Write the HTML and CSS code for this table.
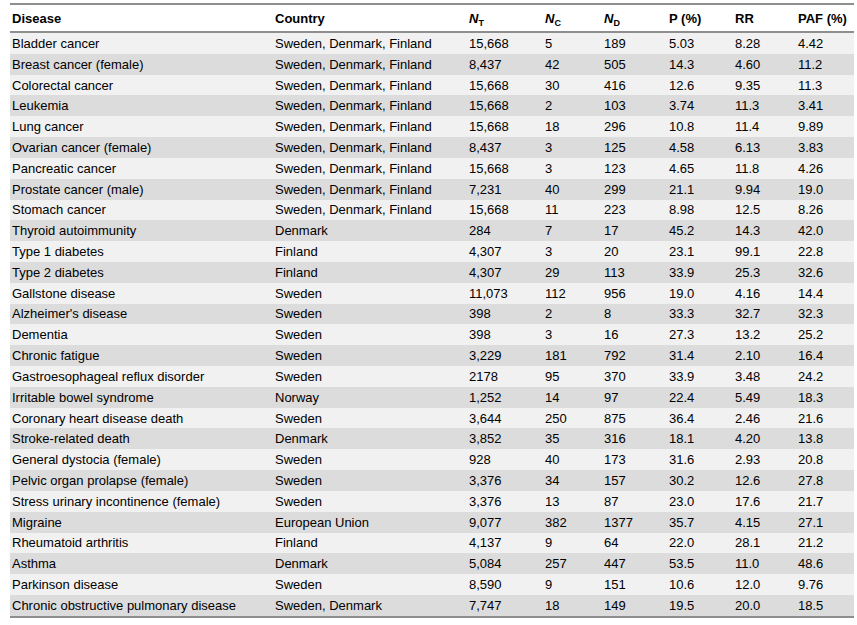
FILE: index.html
```html
<!DOCTYPE html>
<html>
<head>
<meta charset="utf-8">
<link rel="stylesheet" href="styles.css">
</head>
<body>
<table class="data">
<colgroup>
<col class="c1"><col class="c2"><col class="c3"><col class="c4"><col class="c5"><col class="c6"><col class="c7"><col class="c8">
</colgroup>
<thead>
<tr><th>Disease</th><th>Country</th><th><i>N</i><sub>T</sub></th><th><i>N</i><sub>C</sub></th><th><i>N</i><sub>D</sub></th><th>P (%)</th><th>RR</th><th>PAF (%)</th></tr>
</thead>
<tbody>
<tr><td>Bladder cancer</td><td>Sweden, Denmark, Finland</td><td>15,668</td><td>5</td><td>189</td><td>5.03</td><td>8.28</td><td>4.42</td></tr>
<tr><td>Breast cancer (female)</td><td>Sweden, Denmark, Finland</td><td>8,437</td><td>42</td><td>505</td><td>14.3</td><td>4.60</td><td>11.2</td></tr>
<tr><td>Colorectal cancer</td><td>Sweden, Denmark, Finland</td><td>15,668</td><td>30</td><td>416</td><td>12.6</td><td>9.35</td><td>11.3</td></tr>
<tr><td>Leukemia</td><td>Sweden, Denmark, Finland</td><td>15,668</td><td>2</td><td>103</td><td>3.74</td><td>11.3</td><td>3.41</td></tr>
<tr><td>Lung cancer</td><td>Sweden, Denmark, Finland</td><td>15,668</td><td>18</td><td>296</td><td>10.8</td><td>11.4</td><td>9.89</td></tr>
<tr><td>Ovarian cancer (female)</td><td>Sweden, Denmark, Finland</td><td>8,437</td><td>3</td><td>125</td><td>4.58</td><td>6.13</td><td>3.83</td></tr>
<tr><td>Pancreatic cancer</td><td>Sweden, Denmark, Finland</td><td>15,668</td><td>3</td><td>123</td><td>4.65</td><td>11.8</td><td>4.26</td></tr>
<tr><td>Prostate cancer (male)</td><td>Sweden, Denmark, Finland</td><td>7,231</td><td>40</td><td>299</td><td>21.1</td><td>9.94</td><td>19.0</td></tr>
<tr><td>Stomach cancer</td><td>Sweden, Denmark, Finland</td><td>15,668</td><td>11</td><td>223</td><td>8.98</td><td>12.5</td><td>8.26</td></tr>
<tr><td>Thyroid autoimmunity</td><td>Denmark</td><td>284</td><td>7</td><td>17</td><td>45.2</td><td>14.3</td><td>42.0</td></tr>
<tr><td>Type 1 diabetes</td><td>Finland</td><td>4,307</td><td>3</td><td>20</td><td>23.1</td><td>99.1</td><td>22.8</td></tr>
<tr><td>Type 2 diabetes</td><td>Finland</td><td>4,307</td><td>29</td><td>113</td><td>33.9</td><td>25.3</td><td>32.6</td></tr>
<tr><td>Gallstone disease</td><td>Sweden</td><td>11,073</td><td>112</td><td>956</td><td>19.0</td><td>4.16</td><td>14.4</td></tr>
<tr><td>Alzheimer's disease</td><td>Sweden</td><td>398</td><td>2</td><td>8</td><td>33.3</td><td>32.7</td><td>32.3</td></tr>
<tr><td>Dementia</td><td>Sweden</td><td>398</td><td>3</td><td>16</td><td>27.3</td><td>13.2</td><td>25.2</td></tr>
<tr><td>Chronic fatigue</td><td>Sweden</td><td>3,229</td><td>181</td><td>792</td><td>31.4</td><td>2.10</td><td>16.4</td></tr>
<tr><td>Gastroesophageal reflux disorder</td><td>Sweden</td><td>2178</td><td>95</td><td>370</td><td>33.9</td><td>3.48</td><td>24.2</td></tr>
<tr><td>Irritable bowel syndrome</td><td>Norway</td><td>1,252</td><td>14</td><td>97</td><td>22.4</td><td>5.49</td><td>18.3</td></tr>
<tr><td>Coronary heart disease death</td><td>Sweden</td><td>3,644</td><td>250</td><td>875</td><td>36.4</td><td>2.46</td><td>21.6</td></tr>
<tr><td>Stroke-related death</td><td>Denmark</td><td>3,852</td><td>35</td><td>316</td><td>18.1</td><td>4.20</td><td>13.8</td></tr>
<tr><td>General dystocia (female)</td><td>Sweden</td><td>928</td><td>40</td><td>173</td><td>31.6</td><td>2.93</td><td>20.8</td></tr>
<tr><td>Pelvic organ prolapse (female)</td><td>Sweden</td><td>3,376</td><td>34</td><td>157</td><td>30.2</td><td>12.6</td><td>27.8</td></tr>
<tr><td>Stress urinary incontinence (female)</td><td>Sweden</td><td>3,376</td><td>13</td><td>87</td><td>23.0</td><td>17.6</td><td>21.7</td></tr>
<tr><td>Migraine</td><td>European Union</td><td>9,077</td><td>382</td><td>1377</td><td>35.7</td><td>4.15</td><td>27.1</td></tr>
<tr><td>Rheumatoid arthritis</td><td>Finland</td><td>4,137</td><td>9</td><td>64</td><td>22.0</td><td>28.1</td><td>21.2</td></tr>
<tr><td>Asthma</td><td>Denmark</td><td>5,084</td><td>257</td><td>447</td><td>53.5</td><td>11.0</td><td>48.6</td></tr>
<tr><td>Parkinson disease</td><td>Sweden</td><td>8,590</td><td>9</td><td>151</td><td>10.6</td><td>12.0</td><td>9.76</td></tr>
<tr><td>Chronic obstructive pulmonary disease</td><td>Sweden, Denmark</td><td>7,747</td><td>18</td><td>149</td><td>19.5</td><td>20.0</td><td>18.5</td></tr>
</tbody>
</table>
</body>
</html>
```
FILE: styles.css
```css
html, body {
  margin: 0;
  padding: 0;
  background: #ffffff;
}
body {
  padding: 3px 0 0 10px;
  font-family: "Liberation Sans", Arial, sans-serif;
  font-size: 13px;
  color: #000;
}
.data {
  border-collapse: collapse;
  table-layout: fixed;
  width: 844px;
  border-top: 2px solid #8e8e8e;
  border-bottom: 2px solid #8e8e8e;
}
.c1 { width: 263px; }
.c2 { width: 194px; }
.c3 { width: 76px; }
.c4 { width: 59px; }
.c5 { width: 65px; }
.c6 { width: 66px; }
.c7 { width: 63px; }
.c8 { width: 58px; }
.data th {
  text-align: left;
  font-weight: bold;
  height: 26px;
  padding: 0 2px;
  border-bottom: 2px solid #8e8e8e;
  white-space: nowrap;
}
.data th i {
  font-style: italic;
}
.data th sub {
  font-size: 9px;
  vertical-align: -3px;
  line-height: 0;
}
.data td {
  height: 20.82px;
  padding: 0 2px;
  white-space: nowrap;
  line-height: 15px;
}
.data tbody tr:nth-child(odd) td {
  background: #f1f1f1;
}
.data tbody tr:nth-child(even) td {
  background: #dcdcdd;
}
```
